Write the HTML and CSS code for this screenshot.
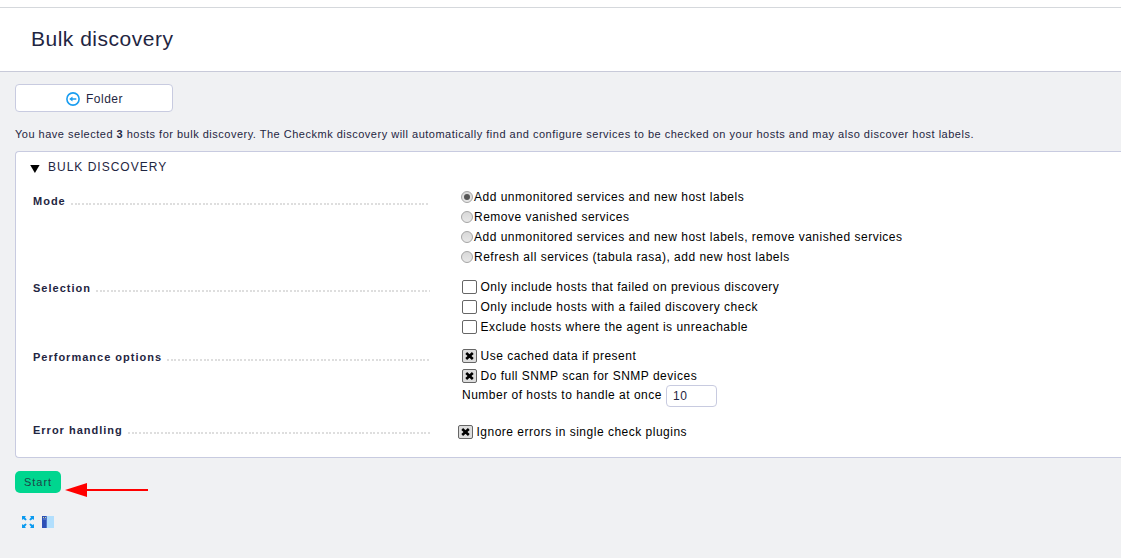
FILE: index.html
```html
<!DOCTYPE html>
<html lang="en">
<head>
<meta charset="utf-8">
<title>Bulk discovery</title>
<link rel="stylesheet" href="styles.css">
</head>
<body>
<header class="header"><h1 class="title">Bulk discovery</h1></header>
<main class="main">
  <a class="folder">
    <svg width="14" height="14" viewBox="0 0 14 14"><circle cx="7" cy="7" r="6.1" fill="none" stroke="#1a9df0" stroke-width="1.6"/><path d="M3.2 7 6.5 4.4V6.2H10.3V7.8H6.5V9.6z" fill="#1a9df0"/></svg>
    <span>Folder</span>
  </a>
  <p class="message">You have selected <b>3</b> hosts for bulk discovery. The Checkmk discovery will automatically find and configure services to be checked on your hosts and may also discover host labels.</p>
  <section class="panel">
    <h2 class="panel-title"><svg width="10" height="8" viewBox="0 0 10 8"><path d="M0.2 0H9.6L4.9 8z" fill="#000"/></svg><span>BULK DISCOVERY</span></h2>
    <div class="row mode">
      <div class="legend"><b>Mode</b><span class="dots"></span></div>
      <div class="content radios">
        <label class="option"><span class="radio checked"></span>Add unmonitored services and new host labels</label>
        <label class="option"><span class="radio"></span>Remove vanished services</label>
        <label class="option"><span class="radio"></span>Add unmonitored services and new host labels, remove vanished services</label>
        <label class="option"><span class="radio"></span>Refresh all services (tabula rasa), add new host labels</label>
      </div>
    </div>
    <div class="row selection">
      <div class="legend"><b>Selection</b><span class="dots"></span></div>
      <div class="content">
        <label class="option"><span class="box"></span>Only include hosts that failed on previous discovery</label>
        <label class="option"><span class="box"></span>Only include hosts with a failed discovery check</label>
        <label class="option"><span class="box"></span>Exclude hosts where the agent is unreachable</label>
      </div>
    </div>
    <div class="row performance">
      <div class="legend"><b>Performance options</b><span class="dots"></span></div>
      <div class="content">
        <label class="option"><span class="box on"><svg width="9" height="8" viewBox="0 0 9 8"><path d="M1.2 1 7.8 7M7.8 1 1.2 7" stroke="#000" stroke-width="2.6"/></svg></span>Use cached data if present</label>
        <label class="option"><span class="box on"><svg width="9" height="8" viewBox="0 0 9 8"><path d="M1.2 1 7.8 7M7.8 1 1.2 7" stroke="#000" stroke-width="2.6"/></svg></span>Do full SNMP scan for SNMP devices</label>
        <label class="number">Number of hosts to handle at once<span class="field">10</span></label>
      </div>
    </div>
    <div class="row errors">
      <div class="legend"><b>Error handling</b><span class="dots"></span></div>
      <div class="content">
        <label class="option"><span class="box on"><svg width="9" height="8" viewBox="0 0 9 8"><path d="M1.2 1 7.8 7M7.8 1 1.2 7" stroke="#000" stroke-width="2.6"/></svg></span>Ignore errors in single check plugins</label>
      </div>
    </div>
  </section>
  <div class="actions">
    <button class="start">Start</button>
    <svg class="arrow" width="84" height="14" viewBox="0 0 84 14"><path d="M0 7 22 0V14z" fill="#f00"/><path d="M20 7H83" stroke="#f00" stroke-width="2"/></svg>
  </div>
  <footer class="footer">
    <svg width="12" height="12" viewBox="0 0 12 12" fill="#0c9bf0"><path id="corner" d="M0 0H4L2.9 1.2 4.7 3.4 3.6 4.5 1.2 2.9 0 4z"/><use href="#corner" transform="matrix(-1 0 0 1 12 0)"/><use href="#corner" transform="matrix(1 0 0 -1 0 12)"/><use href="#corner" transform="matrix(-1 0 0 -1 12 12)"/></svg>
    <svg width="12" height="12" viewBox="0 0 12 12"><path d="M0 0H5V12H0z" fill="#2d50b7"/><path d="M1 2H4V4H1z" fill="#4f70c5"/><path d="M1 1H2V2H1zM3 1H4V2H3z" fill="#d6d994"/><path d="M4 0H5V12H4z" fill="#5278cd"/><path d="M5 0H12V12H5z" fill="#b2dffd"/></svg>
  </footer>
</main>
</body>
</html>
```
FILE: styles.css
```css
* { box-sizing: border-box; }
body { margin: 0; height: 558px; overflow: hidden; background: #f0f1f3; color: #1f2642; font-family: "Liberation Sans", Arial, sans-serif; font-size: 12px; letter-spacing: 0.5px; }
.header { height: 72px; padding-top: 7px; background: #fff; border-bottom: 1px solid #c8cad9; }
.title { margin: 0; height: 64px; padding-left: 31px; border-top: 1px solid #d5d8dc; font-size: 21px; font-weight: 400; line-height: 62px; }
.main { padding: 12px 0 0 15px; }
.folder { display: flex; align-items: center; justify-content: center; gap: 6px; width: 158px; height: 28px; padding: 1px 0 0 1px; background: #fff; border: 1px solid #c8cbe0; border-radius: 4px; }
.message { margin: 15px 0 0; font-size: 11px; line-height: 14px; white-space: nowrap; }
.panel { height: 307px; margin-top: 10px; padding: 8px 0 0 17px; background: #fff; border: 1px solid #c8cbe0; border-right: 0; border-radius: 4px 0 0 4px; }
.panel-title { display: flex; align-items: center; gap: 8px; height: 14px; margin: 0 0 0 -3px; font-size: 12px; font-weight: 400; letter-spacing: 1px; }
.panel-title svg { margin-top: 4px; }
.row { display: flex; }
.legend { display: flex; width: 397px; height: 14px; line-height: 14px; font-size: 11px; letter-spacing: 1px; }
.dots { flex: 1; height: 2px; margin: 9px 0 0 5px; background: repeating-linear-gradient(90deg, #dedede 0 2px, transparent 2px 3.66px); }
.content { display: flex; flex-direction: column; margin-left: 32px; color: #000; white-space: nowrap; }
.option { display: flex; align-items: center; height: 20px; }
.mode { height: 93px; padding-top: 13px; }
.mode .legend { margin-top: 7px; }
.radios { margin-left: 31px; }
.radio { display: grid; place-items: center; width: 12px; height: 12px; margin-right: 1px; border: 1px solid #a5a5a5; border-radius: 50%; background: linear-gradient(#d8d8d8, #e8e8e8); }
.checked::after { content: ""; width: 6px; height: 6px; border-radius: 50%; background: #555; }
.selection { margin-top: 10px; height: 69px; }
.selection .legend { margin-top: 4px; }
.performance { height: 76px; }
.performance .legend { margin-top: 4px; }
.box { display: grid; place-items: center; width: 15px; height: 14px; margin-right: 3.5px; border: 1px solid #666; border-radius: 2px; background: #fff; }
.on { background: #ddd; }
.number { display: flex; align-items: flex-start; height: 22px; line-height: 19px; }
.field { width: 51px; height: 22px; margin: -1px 0 0 4px; padding-left: 6px; border: 1px solid #c8cbe0; border-radius: 4px; line-height: 21px; color: #1f2642; }
.errors .content { margin-left: 28px; }
.errors .legend { margin-top: 1px; }
.actions { display: flex; align-items: flex-start; gap: 4px; height: 45px; padding-top: 13px; }
.start { width: 46px; height: 22px; padding: 0; border: 0; border-radius: 5px; background: #00d68f; color: #1e4548; font: 11px "Liberation Sans", Arial, sans-serif; letter-spacing: 1px; }
.arrow { margin-top: 12px; }
.footer { display: flex; gap: 8px; padding: 13px 0 0 7px; }
```
